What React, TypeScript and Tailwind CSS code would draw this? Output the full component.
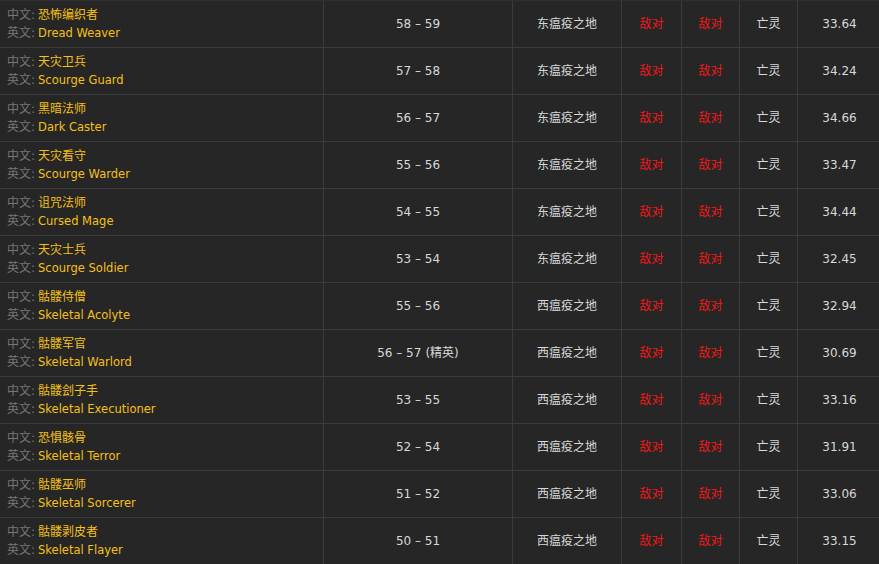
import React from 'react';

interface Mob {
  cn: string;
  en: string;
  level: string;
  elite?: boolean;
  zone: string;
  type: string;
  value: string;
}

const MOBS: Mob[] = [
  { cn: '恐怖编织者', en: 'Dread Weaver', level: '58 – 59', zone: '东瘟疫之地', type: '亡灵', value: '33.64' },
  { cn: '天灾卫兵', en: 'Scourge Guard', level: '57 – 58', zone: '东瘟疫之地', type: '亡灵', value: '34.24' },
  { cn: '黑暗法师', en: 'Dark Caster', level: '56 – 57', zone: '东瘟疫之地', type: '亡灵', value: '34.66' },
  { cn: '天灾看守', en: 'Scourge Warder', level: '55 – 56', zone: '东瘟疫之地', type: '亡灵', value: '33.47' },
  { cn: '诅咒法师', en: 'Cursed Mage', level: '54 – 55', zone: '东瘟疫之地', type: '亡灵', value: '34.44' },
  { cn: '天灾士兵', en: 'Scourge Soldier', level: '53 – 54', zone: '东瘟疫之地', type: '亡灵', value: '32.45' },
  { cn: '骷髅侍僧', en: 'Skeletal Acolyte', level: '55 – 56', zone: '西瘟疫之地', type: '亡灵', value: '32.94' },
  { cn: '骷髅军官', en: 'Skeletal Warlord', level: '56 – 57', elite: true, zone: '西瘟疫之地', type: '亡灵', value: '30.69' },
  { cn: '骷髅刽子手', en: 'Skeletal Executioner', level: '53 – 55', zone: '西瘟疫之地', type: '亡灵', value: '33.16' },
  { cn: '恐惧骸骨', en: 'Skeletal Terror', level: '52 – 54', zone: '西瘟疫之地', type: '亡灵', value: '31.91' },
  { cn: '骷髅巫师', en: 'Skeletal Sorcerer', level: '51 – 52', zone: '西瘟疫之地', type: '亡灵', value: '33.06' },
  { cn: '骷髅剥皮者', en: 'Skeletal Flayer', level: '50 – 51', zone: '西瘟疫之地', type: '亡灵', value: '33.15' },
];

const cell = 'flex items-center justify-center border-r border-[#3b3b3b]';

export default function App() {
  return (
    <div
      className="w-[879px] h-[564px] overflow-hidden bg-[#262626] border-t border-[#2e2e2e] text-[12px] text-[#d8d8d8]"
      style={{ fontFamily: '"DejaVu Sans", "Noto Sans CJK SC", sans-serif' }}
    >
      {MOBS.map(mob => (
        <div
          key={mob.en}
          className="grid grid-cols-[324px_189px_109px_60px_58px_58px_83px] h-[47px] border-b border-[#3b3b3b]"
        >
          {/* Name */}
          <div className="flex flex-col justify-center pl-[7px] border-r border-[#3b3b3b] leading-[18px]">
            <div>
              <span className="text-[#767676]">中文:</span>
              <span className="ml-[3px] text-[#f5c016]">{mob.cn}</span>
            </div>
            <div>
              <span className="text-[#767676]">英文:</span>
              <span className="ml-[3px] text-[#f5c016] text-[11.5px]">{mob.en}</span>
            </div>
          </div>
          <div className={cell}>
            {mob.level}
            {mob.elite && <span className="ml-1">(精英)</span>}
          </div>
          <div className={cell}>{mob.zone}</div>
          <div className={`${cell} text-[#f01818]`}>敌对</div>
          <div className={`${cell} text-[#f01818]`}>敌对</div>
          <div className={cell}>{mob.type}</div>
          <div className="flex items-center justify-center">{mob.value}</div>
        </div>
      ))}
    </div>
  );
}
